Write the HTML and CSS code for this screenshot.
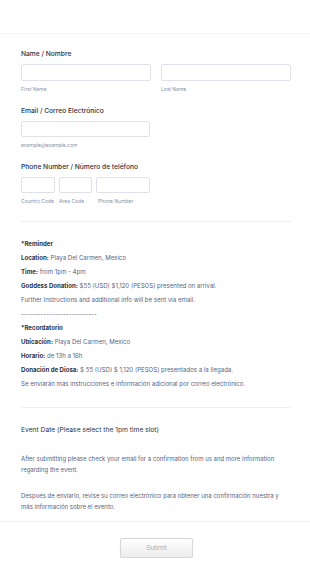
FILE: index.html
```html
<!DOCTYPE html>
<html lang="en">
<head>
    <meta charset="UTF-8">
    <meta name="viewport" content="width=device-width, initial-scale=1.0">
    <title>Event Registration</title>
    <link rel="stylesheet" href="styles.css">
</head>
<body>

<div class="top-band"></div>

<form class="form">
    <div class="field field-name">
        <label class="label">Name / Nombre</label>
        <div class="row">
            <div class="col">
                <input type="text" class="input input-half">
                <span class="sublabel">First Name</span>
            </div>
            <div class="col">
                <input type="text" class="input input-half">
                <span class="sublabel">Last Name</span>
            </div>
        </div>
    </div>

    <div class="field">
        <label class="label">Email / Correo Electrónico</label>
        <input type="email" class="input input-email">
        <span class="sublabel">example@example.com</span>
    </div>

    <div class="field">
        <label class="label">Phone Number / Número de teléfono</label>
        <div class="row row-phone">
            <div class="col">
                <input type="tel" class="input input-country">
                <span class="sublabel">Country Code</span>
            </div>
            <div class="col">
                <input type="tel" class="input input-area">
                <span class="sublabel">Area Code</span>
            </div>
            <div class="col">
                <input type="tel" class="input input-phone">
                <span class="sublabel sublabel-indent">Phone Number</span>
            </div>
        </div>
    </div>

    <div class="divider"></div>

    <div class="info">
        <p><b>*Reminder</b></p>
        <p><b>Location:</b> Playa Del Carmen, Mexico</p>
        <p><b>Time:</b> from 1pm - 4pm</p>
        <p><b>Goddess Donation:</b> $55 (USD) $1,120 (PESOS) presented on arrival.</p>
        <p>Further Instructions and additional info will be sent via email.</p>
        <p>---------------------------</p>
        <p><b>*Recordatorio</b></p>
        <p><b>Ubicación:</b> Playa Del Carmen, Mexico</p>
        <p><b>Horario:</b> de 13h a 16h</p>
        <p><b>Donación de Diosa:</b> $ 55 (USD) $ 1,120 (PESOS) presentados a la llegada.</p>
        <p>Se enviarán más instrucciones e información adicional por correo electrónico.</p>
    </div>

    <div class="divider"></div>

    <div class="event-date">Event Date (Please select the 1pm time slot)</div>

    <p class="note">After submitting please check your email for a confirmation from us and more information regarding the event.</p>
    <p class="note note-es">Después de enviarlo, revise su correo electrónico para obtener una confirmación nuestra y más información sobre el evento.</p>
</form>

<div class="submit-area">
    <button type="button" class="submit">Submit</button>
</div>

</body>
</html>
```

FILE: styles.css
```css
/* General */
body {
    margin: 0;
    background: #ffffff;
    font-family: 'Inter', 'Noto Sans', sans-serif;
    color: #2c3345;
}
.top-band {
    height: 33px;
    border-bottom: 1px solid #f3f4f6;
}
.form {
    padding: 0 19px 0 21px;
}

/* Fields */
.field {
    padding-top: 13px;
}
.field-name {
    padding-top: 15px;
}
.label {
    display: block;
    font-size: 6.7px;
    line-height: 10px;
    font-weight: 500;
    color: #2c3345;
    margin-bottom: 5px;
}
.row {
    display: flex;
    gap: 10px;
}
.row-phone {
    gap: 4px;
}
.col {
    display: flex;
    flex-direction: column;
}
.input {
    box-sizing: border-box;
    height: 17px;
    margin: 0;
    border: 1px solid #dfe2ea;
    border-radius: 2px;
    background: #fff;
}
.input-half { width: 130px; }
.input-email { width: 129px; height: 16px; display: block; }
.input-country { width: 34px; height: 16px; }
.input-area { width: 33px; height: 16px; }
.input-phone { width: 54px; height: 16px; }
.sublabel {
    display: block;
    font-size: 5px;
    line-height: 8px;
    color: #8a93a6;
    margin-top: 4px;
}
.sublabel-indent {
    padding-left: 2px;
}

.divider {
    height: 1px;
    background: #eef0f4;
    margin-top: 16px;
}

/* Reminder block */
.info {
    padding-top: 15px;
    font-size: 6.1px;
    color: #57647e;
}
.info p {
    margin: 0;
    line-height: 14px;
}
.info b {
    color: #2c3345;
    font-weight: 700;
}

.event-date {
    padding-top: 17px;
    font-size: 6.7px;
    line-height: 10px;
    color: #2c3345;
}
.note {
    margin: 18px 0 0;
    font-size: 6px;
    line-height: 11px;
    color: #57647e;
}
.note-es {
    margin-top: 15px;
}

/* Submit */
.submit-area {
    margin-top: 9px;
    border-top: 1px solid #f1f2f4;
    padding-top: 12px;
    padding-left: 120px;
}
.submit {
    width: 73px;
    height: 20px;
    border: 1px solid #d8d8d8;
    border-radius: 2px;
    background: linear-gradient(to bottom, #ffffff, #ececec);
    box-shadow: 0 1px 1px rgba(0, 0, 0, 0.15);
    color: #b0b0b0;
    font-family: 'Liberation Sans', Arial, sans-serif;
    font-size: 6.6px;
}
```
